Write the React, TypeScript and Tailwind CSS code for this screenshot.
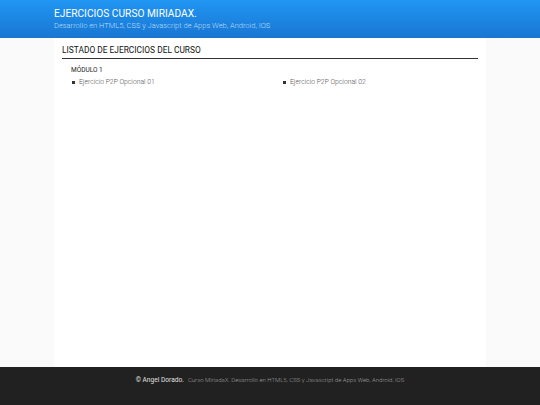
export default function App() {
  const items = ['Ejercicio P2P Opcional 01', 'Ejercicio P2P Opcional 02'];

  return (
    <div className="flex h-[405px] flex-col bg-[#fafafa] font-['Roboto',sans-serif]">
      <header className="h-[38px] shrink-0 bg-gradient-to-b from-[#2196f3] to-[#1976d2] px-[54px] pt-[7px]">
        <h1 className="text-[10.2px] leading-[13px] text-white">EJERCICIOS CURSO MIRIADAX.</h1>
        <p className="mt-[1px] text-[7.5px] font-light leading-[10px] text-[#bbdefb]">
          Desarrollo en HTML5, CSS y Javascript de Apps Web, Android, IOS
        </p>
      </header>

      <main className="mx-[54px] flex-1 bg-white px-2 pt-[7px]">
        <h2 className="border-b border-[#333] pb-[2px] text-[8.4px] leading-[11px] text-[#111]">
          LISTADO DE EJERCICIOS DEL CURSO
        </h2>
        <div className="pl-[9px] pt-[7px]">
          <h3 className="text-[6.5px] leading-[9px] text-[#222]">MÓDULO 1</h3>
          <ul className="mt-[3px] flex">
            {items.map((item) => (
              <li key={item} className="flex w-[211px] shrink-0 items-center gap-[4.5px] pl-[1px] text-[6.8px] font-light leading-[9px] text-[#555]">
                <span className="h-[2.5px] w-[2.5px] bg-[#333]" />
                {item}
              </li>
            ))}
          </ul>
        </div>
      </main>

      <footer className="h-[38px] shrink-0 bg-[#212121] pt-[5px] text-center leading-[10px]">
        <span className="text-[6.6px] text-[#e0e0e0]">© Angel Dorado.</span>{' '}
        <span className="text-[6px] font-light text-[#9e9e9e]">
          Curso MiriadaX. Desarrollo en HTML5, CSS y Javascript de Apps Web, Android, IOS
        </span>
      </footer>
    </div>
  );
}
